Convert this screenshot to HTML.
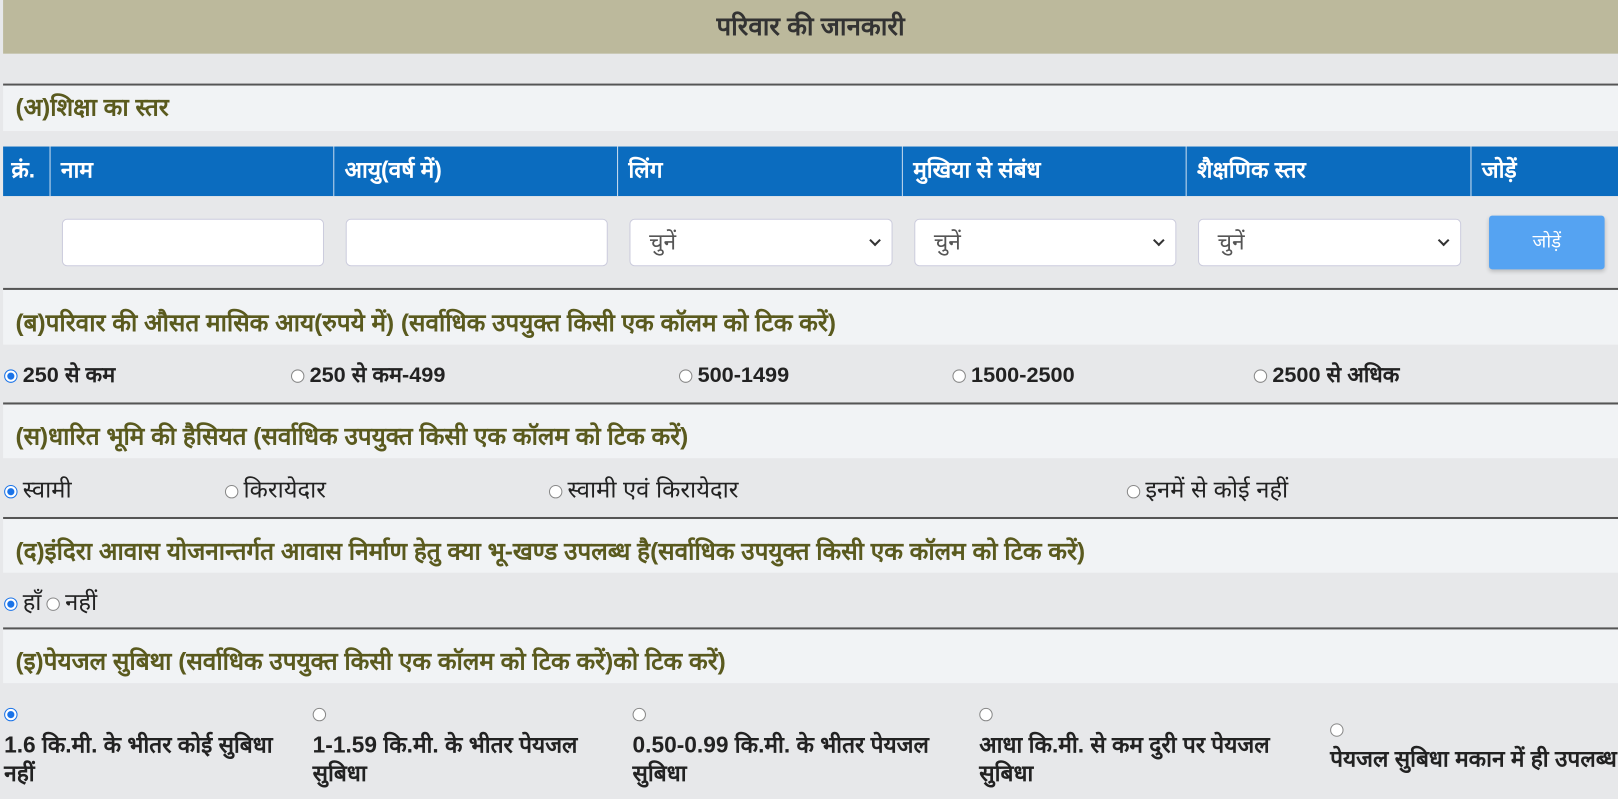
<!DOCTYPE html>
<html><head><meta charset="utf-8"><style>
*{box-sizing:border-box;margin:0;padding:0}
body{width:1618px;height:798px;overflow:hidden;background:#e7e8ea;font-family:"Liberation Sans",sans-serif;color:#222}
#wrap{position:relative;width:1568px;height:774px;transform:scale(1.0319);transform-origin:0 0}
.a{position:absolute}
.title{left:3px;top:0;width:1565px;height:52px;background:#bcb99c;text-align:center;font-size:25px;font-weight:bold;line-height:52px;color:#333}
.line{left:3px;width:1565px;height:2px;background:#555}
.sec{left:3px;width:1565px;background:#f1f3f5;color:#5a5a1e;font-size:23.6px;font-weight:bold;padding-left:12px;white-space:nowrap}
.th{top:142px;height:48px;background:#0b6cbf;color:#fff;font-size:22px;font-weight:bold;line-height:46px;padding-left:10px;border-right:1px solid #cfe0f0}
.inp{background:#fff;border:1px solid #ccd;border-radius:5px;height:46px;top:212px;font-size:22px;color:#555;line-height:44px;padding-left:18px}
.chev{position:absolute;right:12px;top:16px;width:8px;height:8px;border-right:2px solid #333;border-bottom:2px solid #333;transform:rotate(45deg)}
.r{font-size:21px;font-weight:bold;white-space:nowrap;height:28px;line-height:28px}
.n{font-weight:normal;font-size:23px}
.rb{display:inline-block;width:13px;height:13px;border-radius:50%;border:1px solid #888;background:#fff;margin-right:5px;vertical-align:-1px}
.rb.on{border:1px solid #1a73e8;background:radial-gradient(circle,#1a73e8 40%,#fff 48%)}
.w{font-size:22px;font-weight:bold;line-height:28px}
</style></head><body><div id="wrap">
<div class="a title">परिवार की जानकारी</div>
<div class="a line" style="top:81px"></div>
<div class="a sec" style="top:83px;height:44px;line-height:44px">(अ)शिक्षा का स्तर</div>
<div class="a th" style="left:3px;width:46px;padding-left:8px">क्रं.</div>
<div class="a th" style="left:49px;width:275px">नाम</div>
<div class="a th" style="left:324px;width:275px">आयु(वर्ष में)</div>
<div class="a th" style="left:599px;width:276px">लिंग</div>
<div class="a th" style="left:875px;width:275px">मुखिया से संबंध</div>
<div class="a th" style="left:1150px;width:276px">शैक्षणिक स्तर</div>
<div class="a th" style="left:1426px;width:142px;border-right:none">जोड़ें</div>
<div class="a inp" style="left:60px;width:254px"></div>
<div class="a inp" style="left:335px;width:254px"></div>
<div class="a inp" style="left:610px;width:255px">चुनें<span class="chev"></span></div>
<div class="a inp" style="left:886px;width:254px">चुनें<span class="chev"></span></div>
<div class="a inp" style="left:1161px;width:255px">चुनें<span class="chev"></span></div>
<div class="a" style="left:1443px;top:209px;width:112px;height:52px;background:#55a3f2;border-radius:3px;color:#fff;text-align:center;line-height:50px;font-size:18px;box-shadow:0 2px 4px rgba(0,0,0,.2)">जोड़ें</div>
<div class="a line" style="top:279px"></div>
<div class="a sec" style="top:281px;height:53px;line-height:66px">(ब)परिवार की औसत मासिक आय(रुपये में) (सर्वाधिक उपयुक्त किसी एक कॉलम को टिक करें)</div>
<div class="a r" style="left:4px;top:350px"><span class="rb on"></span>250 से कम</div>
<div class="a r" style="left:282px;top:350px"><span class="rb"></span>250 से कम-499</div>
<div class="a r" style="left:658px;top:350px"><span class="rb"></span>500-1499</div>
<div class="a r" style="left:923px;top:350px"><span class="rb"></span>1500-2500</div>
<div class="a r" style="left:1215px;top:350px"><span class="rb"></span>2500 से अधिक</div>
<div class="a line" style="top:390px"></div>
<div class="a sec" style="top:392px;height:52px;line-height:64px">(स)धारित भूमि की हैसियत (सर्वाधिक उपयुक्त किसी एक कॉलम को टिक करें)</div>
<div class="a r n" style="left:4px;top:460px"><span class="rb on"></span>स्वामी</div>
<div class="a r n" style="left:218px;top:460px"><span class="rb"></span>किरायेदार</div>
<div class="a r n" style="left:532px;top:460px"><span class="rb"></span>स्वामी एवं किरायेदार</div>
<div class="a r n" style="left:1092px;top:460px"><span class="rb"></span>इनमें से कोई नहीं</div>
<div class="a line" style="top:501px"></div>
<div class="a sec" style="top:503px;height:52px;line-height:64px">(द)इंदिरा आवास योजनान्तर्गत आवास निर्माण हेतु क्या भू-खण्ड उपलब्ध है(सर्वाधिक उपयुक्त किसी एक कॉलम को टिक करें)</div>
<div class="a r n" style="left:4px;top:569px"><span class="rb on"></span>हाँ<span class="rb" style="margin-left:5px"></span>नहीं</div>
<div class="a line" style="top:608px"></div>
<div class="a sec" style="top:610px;height:52px;line-height:64px">(इ)पेयजल सुबिथा (सर्वाधिक उपयुक्त किसी एक कॉलम को टिक करें)को टिक करें)</div>
<div class="a" style="left:4px;top:685px"><span class="rb on"></span></div>
<div class="a w" style="left:4px;top:708px;width:280px">1.6 कि.मी. के भीतर कोई सुबिधा नहीं</div>
<div class="a" style="left:303px;top:685px"><span class="rb"></span></div>
<div class="a w" style="left:303px;top:708px;width:280px">1-1.59 कि.मी. के भीतर पेयजल सुबिधा</div>
<div class="a" style="left:613px;top:685px"><span class="rb"></span></div>
<div class="a w" style="left:613px;top:708px;width:300px">0.50-0.99 कि.मी. के भीतर पेयजल सुबिधा</div>
<div class="a" style="left:949px;top:685px"><span class="rb"></span></div>
<div class="a w" style="left:949px;top:708px;width:300px">आधा कि.मी. से कम दुरी पर पेयजल सुबिधा</div>
<div class="a" style="left:1289px;top:700px"><span class="rb"></span></div>
<div class="a w" style="left:1289px;top:722px;white-space:nowrap">पेयजल सुबिधा मकान में ही उपलब्ध</div>
</div></body></html>
